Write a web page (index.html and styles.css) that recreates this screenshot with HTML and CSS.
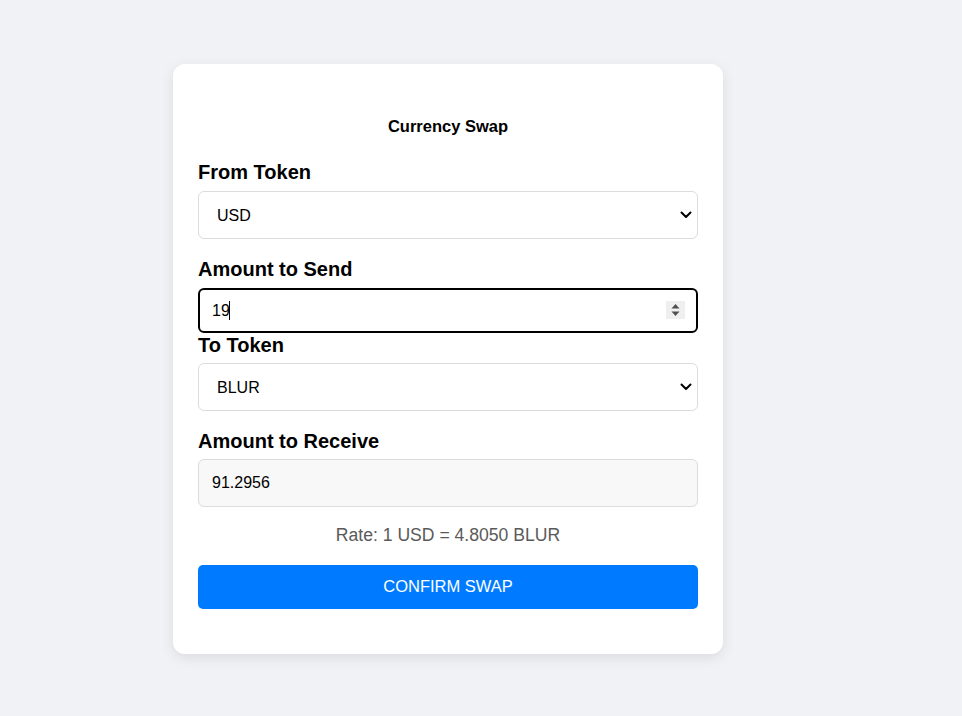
FILE: index.html
```html
<!DOCTYPE html>
<html lang="en">
<head>
<meta charset="utf-8">
<title>Currency Swap</title>
<link rel="stylesheet" href="styles.css">
</head>
<body>
<div class="card">
  <h2 class="title">Currency Swap</h2>

  <label class="label" for="from">From Token</label>
  <div class="select-wrap">
    <select id="from" class="select">
      <option>USD</option>
    </select>
    <svg class="chevron" width="12" height="8" viewBox="0 0 12 8"><polyline points="1.5,1.5 6,6 10.5,1.5" fill="none" stroke="#000" stroke-width="2" stroke-linecap="round" stroke-linejoin="round"/></svg>
  </div>

  <label class="label" for="send">Amount to Send</label>
  <div class="input-wrap">
    <input id="send" class="input input-focus" type="text" value="19">
    <span class="caret"></span>
    <span class="spinner">
      <svg width="19" height="18" viewBox="0 0 19 18"><polygon points="9.5,3 13.5,7.5 5.5,7.5" fill="#505050"/><polygon points="9.5,15 13.5,10.5 5.5,10.5" fill="#505050"/></svg>
    </span>
  </div>

  <label class="label label-tight" for="to">To Token</label>
  <div class="select-wrap">
    <select id="to" class="select">
      <option>BLUR</option>
    </select>
    <svg class="chevron" width="12" height="8" viewBox="0 0 12 8"><polyline points="1.5,1.5 6,6 10.5,1.5" fill="none" stroke="#000" stroke-width="2" stroke-linecap="round" stroke-linejoin="round"/></svg>
  </div>

  <label class="label label-recv" for="recv">Amount to Receive</label>
  <input id="recv" class="input input-readonly" type="text" value="91.2956" readonly>

  <p class="rate">Rate: 1 USD = 4.8050 BLUR</p>

  <button class="btn" type="button">CONFIRM SWAP</button>
</div>
</body>
</html>
```
FILE: styles.css
```css
* { box-sizing: border-box; }

html, body {
  margin: 0;
  padding: 0;
}

body {
  background: #f0f2f5;
  font-family: "Liberation Sans", Arial, sans-serif;
  color: #000;
  padding: 64px 0 0 173px;
  min-height: 716px;
}

.card {
  width: 550px;
  background: #fff;
  border-radius: 12px;
  box-shadow: 0 4px 14px rgba(0, 0, 0, 0.09);
  padding: 25px 25px 45px;
  display: flex;
  flex-direction: column;
}

.title {
  margin: 28px 0 25px;
  font-size: 16.5px;
  line-height: 18px;
  font-weight: bold;
  text-align: center;
}

.label {
  display: block;
  font-size: 20px;
  line-height: 24px;
  font-weight: bold;
  margin-bottom: 7px;
}

.label-tight { margin-bottom: 6px; }
.label-recv { margin-bottom: 6px; }

.select-wrap {
  position: relative;
  margin-bottom: 18px;
}

.select {
  -webkit-appearance: none;
  appearance: none;
  display: block;
  width: 100%;
  height: 48px;
  padding: 0 30px 0 18px;
  border: 1px solid #dcdcdc;
  border-radius: 6px;
  background: #fff;
  font-family: "Liberation Sans", Arial, sans-serif;
  font-size: 16px;
  color: #000;
}

.chevron {
  position: absolute;
  right: 6px;
  top: 20px;
  pointer-events: none;
}

.input-wrap {
  position: relative;
}

.input {
  display: block;
  width: 100%;
  font-family: "Liberation Sans", Arial, sans-serif;
  font-size: 16px;
  color: #000;
  outline: none;
}

.input-focus {
  height: 45px;
  border: 2px solid #000;
  border-radius: 6px;
  padding: 0 40px 0 12px;
  background: #fff;
}

.caret {
  position: absolute;
  left: 31px;
  top: 13px;
  width: 1px;
  height: 19px;
  background: #000;
}

.spinner {
  position: absolute;
  right: 13px;
  top: 13px;
  width: 19px;
  height: 18px;
  background: #efefef;
  display: flex;
}

.input-readonly {
  height: 48px;
  border: 1px solid #dcdcdc;
  border-radius: 6px;
  padding: 0 13px;
  background: #f8f8f8;
}

.rate {
  margin: 18px 0 20px;
  font-size: 17.6px;
  line-height: 20px;
  text-align: center;
  color: #5a5a5a;
}

.btn {
  display: block;
  width: 100%;
  height: 44px;
  border: none;
  border-radius: 5px;
  background: #007bff;
  color: #fff;
  font-family: "Liberation Sans", Arial, sans-serif;
  font-size: 16.5px;
  padding: 0 0 1px;
}
```
